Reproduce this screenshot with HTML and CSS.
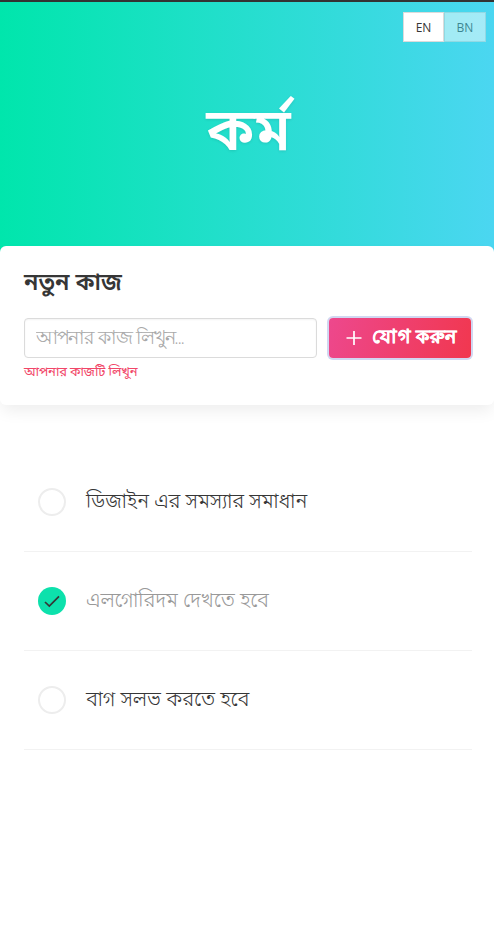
FILE: index.html
```html
<!DOCTYPE html>
<html lang="bn">
<head>
<meta charset="utf-8">
<title>কর্ম</title>
<link rel="stylesheet" href="styles.css">
</head>
<body>
<header class="hero">
  <nav class="lang"><button class="lang-btn active">EN</button><button class="lang-btn">BN</button></nav>
  <h1 class="title">কর্ম</h1>
</header>
<section class="card">
  <h2 class="card-title">নতুন কাজ</h2>
  <form class="form">
    <div class="field"><input class="input" type="text" placeholder="আপনার কাজ লিখুন..."></div>
    <button class="add" type="button"><svg class="plus" viewBox="0 0 16 16"><path d="M8 1v14M.5 8h15"/></svg><span class="add-text">যোগ করুন</span></button>
  </form>
  <p class="error">আপনার কাজটি লিখুন</p>
</section>
<ul class="tasks">
  <li class="task"><span class="check"></span><span class="label">ডিজাইন এর সমস্যার সমাধান</span></li>
  <li class="task done"><span class="check"><svg class="tick" viewBox="0 0 28 28"><path d="M7 15l4.3 4L21 9.3"/></svg></span><span class="label">এলগোরিদম দেখতে হবে</span></li>
  <li class="task"><span class="check"></span><span class="label">বাগ সলভ করতে হবে</span></li>
</ul>
</body>
</html>
```
FILE: styles.css
```css
* { box-sizing: border-box; }
body { margin: 0; background: #fff; color: #363636; font-family: "Open Sans", "Noto Sans", "Noto Sans Bengali", sans-serif; }
.hero { height: 252px; border-top: 2px solid #333; padding: 10px 8px; background: linear-gradient(90deg, #00e6ac, #4bd6f1); }
.lang { display: flex; justify-content: flex-end; }
.lang-btn { width: 42px; height: 30px; border: 1px solid #dbdbdb; background: #fff; font: 12px "Open Sans", sans-serif; color: #363636; padding: 0; }
.lang-btn.active { width: 41px; }
.lang-btn + .lang-btn { opacity: .5; }
.title { margin: 40px 0 0 3px; text-align: center; color: #fff; font-size: 59px; font-weight: 600; line-height: 90px; text-shadow: 0 1px 3px rgba(10,10,10,.1); }
.card { position: relative; height: 159px; margin-top: -6px; padding: 17px 22px 0 24px; background: #fff; border-radius: 6px; box-shadow: 0 8px 16px -2px rgba(10,10,10,.07); }
.card-title { margin: 0; font-size: 23.5px; font-weight: 600; line-height: 36px; }
.form { display: flex; gap: 12px; margin-top: 19px; }
.field { flex: 1; }
.input { display: block; width: 100%; height: 40px; border: 1px solid #dbdbdb; border-radius: 4px; padding: 0 11px 3px; font: 300 18.5px "Open Sans", sans-serif; letter-spacing: -1.3px; word-spacing: 1.5px; box-shadow: inset 0 1px 2px rgba(10,10,10,.05); }
.input::placeholder { color: #a9a9a9; }
.add { width: 142px; margin-right: 1px; height: 40px; border: 0; border-radius: 4px; background: linear-gradient(105deg, #ed488d, #f1374f); box-shadow: 0 0 0 2px rgba(72,95,199,.25); color: #fff; font: 800 18.8px "Open Sans", sans-serif; display: flex; align-items: center; justify-content: flex-start; gap: 10px; padding: 0 0 0 17px; }
.add-text { white-space: nowrap; letter-spacing: .7px; -webkit-text-stroke: .4px #fff; }
.plus { width: 16px; height: 16px; fill: none; stroke: #fff; stroke-width: 1.7; }
.error { margin: 4px 0 0; font-size: 13px; line-height: 18px; letter-spacing: -.15px; color: #f14668; }
.tasks { list-style: none; margin: 48px 22px 0 24px; padding: 0; }
.task { display: flex; align-items: center; height: 99px; padding-left: 14px; border-bottom: 1px solid #f2f2f2; font-size: 20.15px; font-weight: 300; }
.label { position: relative; top: -1px; }
.check { width: 28px; height: 28px; border: 2px solid #ededed; border-radius: 50%; margin-right: 20px; }
.done .check { border: 0; background: #0de1ac; }
.done .label { color: #999; }
.tick { display: block; fill: none; stroke: #363636; stroke-width: 1.7; }
```
